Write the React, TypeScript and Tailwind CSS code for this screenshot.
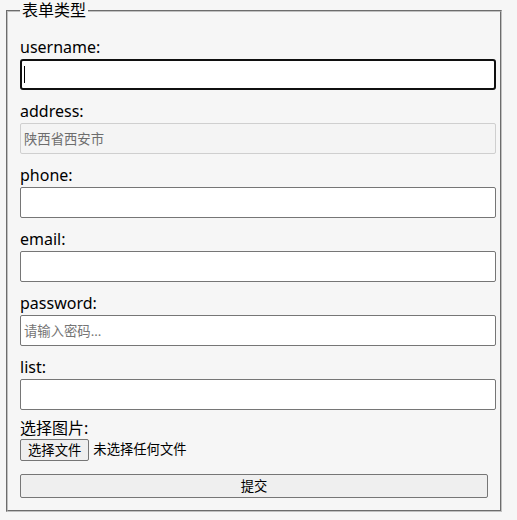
import { useState } from 'react';

const fields = [
  { name: 'username', type: 'text' },
  { name: 'address', type: 'text' },
  { name: 'phone', type: 'tel' },
  { name: 'email', type: 'email' },
  { name: 'password', type: 'password' },
  { name: 'list', type: 'text' },
];

export default function App() {
  const [values, setValues] = useState<Record<string, string>>({ address: '陕西省西安市' });

  const update = (name: string, v: string) => setValues({ ...values, [name]: v });

  return (
    <div className="min-h-screen bg-[#f6f6f6] text-black font-['Noto_Sans','Noto_Sans_CJK_SC',sans-serif]">
      <form onSubmit={(e) => e.preventDefault()} className="pl-[6px] pt-0">
        <fieldset className="w-[496px] border-2 border-[#c0c0c0] [border-style:groove] pl-[12px] pr-[4px] pb-[12px]">
          <legend className="px-[2px] text-[16px] leading-[21px]">表单类型</legend>
          <div className="flex flex-col">
            {fields.map((f, i) => (
              <div key={f.name} className={i === 0 ? 'mt-[15px]' : 'mt-[10px]'}>
                <label htmlFor={f.name} className="block text-[16px] leading-[22px] mb-[1px]">
                  {f.name}:
                </label>
                {f.name === 'username' ? (
                  <div className="relative">
                    <input
                      id={f.name}
                      type="text"
                      value={values[f.name] ?? ''}
                      onChange={(e) => update(f.name, e.target.value)}
                      className="w-[476px] h-[31px] bg-white border-2 border-[#101010] rounded-[3px] px-[2px] text-[13.333px] outline-none"
                    />
                    <span className="absolute left-[4px] top-[7px] w-px h-[17px] bg-black" />
                  </div>
                ) : (
                  <input
                    id={f.name}
                    type={f.type}
                    disabled={f.name === 'address'}
                    placeholder={f.name === 'password' ? '请输入密码...' : undefined}
                    value={values[f.name] ?? ''}
                    onChange={(e) => update(f.name, e.target.value)}
                    className={
                      f.name === 'address'
                        ? 'block w-[476px] h-[31px] bg-[#f4f4f4] border border-[#cfcfcf] rounded-[2px] px-[3px] text-[13.333px] text-[#6d6d6d] outline-none'
                        : 'block w-[476px] h-[31px] bg-white border border-[#767676] rounded-[2px] px-[3px] text-[13.333px] outline-none placeholder:text-[#757575]'
                    }
                  />
                )}
              </div>
            ))}
            <label className="block mt-[7px] text-[16px] leading-[22px]">选择图片:</label>
            <div className="flex items-center">
              <span className="h-[22px] px-[7px] bg-[#efefef] border border-[#767676] rounded-[2px] text-[13.333px] leading-[20px]">
                选择文件
              </span>
              <span className="ml-[4px] text-[13.333px]">未选择任何文件</span>
            </div>
            <button
              type="submit"
              className="mt-[13px] w-[468px] h-[24px] bg-[#efefef] border border-[#767676] rounded-[2px] text-[13.333px] leading-[22px]"
            >
              提交
            </button>
          </div>
        </fieldset>
      </form>
    </div>
  );
}
